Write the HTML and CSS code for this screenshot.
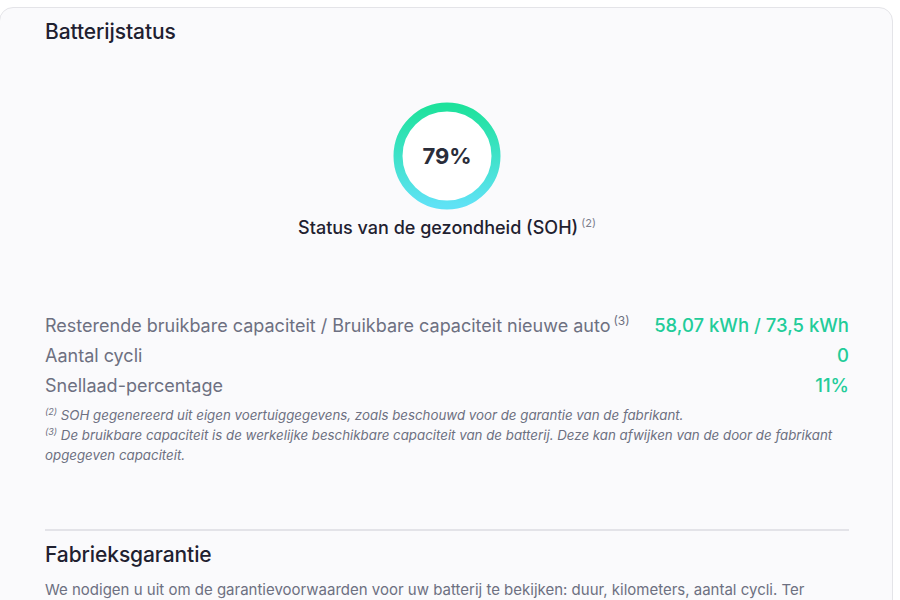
FILE: index.html
```html
<!DOCTYPE html>
<html lang="nl">
<head>
    <meta charset="UTF-8">
    <meta name="viewport" content="width=device-width, initial-scale=1.0">
    <title>Batterijstatus</title>
    <link rel="stylesheet" href="styles.css">
</head>
<body>
    <div class="card">
        <h2 class="section-title">Batterijstatus</h2>

        <div class="soh">
            <div class="soh-ring">
                <svg width="108" height="108" viewBox="0 0 108 108">
                    <defs>
                        <linearGradient id="ringGrad" x1="0" y1="0" x2="0" y2="1">
                            <stop offset="0" stop-color="#1ee29c"/>
                            <stop offset="1" stop-color="#5fe2f5"/>
                        </linearGradient>
                    </defs>
                    <circle cx="54" cy="54" r="49" fill="#ffffff" stroke="url(#ringGrad)" stroke-width="9"/>
                </svg>
                <span class="soh-value">79%</span>
            </div>
            <div class="soh-label">Status van de gezondheid (SOH)<sup>(2)</sup></div>
        </div>

        <div class="stats">
            <div class="stat-row">
                <span class="stat-label">Resterende bruikbare capaciteit / Bruikbare capaciteit nieuwe auto<sup>(3)</sup></span>
                <span class="stat-value">58,07 kWh / 73,5 kWh</span>
            </div>
            <div class="stat-row">
                <span class="stat-label">Aantal cycli</span>
                <span class="stat-value">0</span>
            </div>
            <div class="stat-row">
                <span class="stat-label">Snellaad-percentage</span>
                <span class="stat-value">11%</span>
            </div>
        </div>

        <div class="notes">
            <p><sup>(2)</sup> SOH gegenereerd uit eigen voertuiggegevens, zoals beschouwd voor de garantie van de fabrikant.</p>
            <p><sup>(3)</sup> De bruikbare capaciteit is de werkelijke beschikbare capaciteit van de batterij. Deze kan afwijken van de door de fabrikant opgegeven capaciteit.</p>
        </div>

        <hr class="divider">

        <h2 class="section-title">Fabrieksgarantie</h2>
        <p class="intro">We nodigen u uit om de garantievoorwaarden voor uw batterij te bekijken: duur, kilometers, aantal cycli. Ter informatie: de garantie is doorgaans gekoppeld aan een minimale waarde van de SOH.</p>
    </div>
</body>
</html>
```

FILE: styles.css
```css
body {
    margin: 0;
    background-color: #ffffff;
    font-family: Inter, "Noto Sans", sans-serif;
    color: #23252f;
    overflow: hidden;
}
.card {
    margin: 7px 7px 0 -1px;
    padding: 12px 43px 40px 45px;
    background-color: #fafafc;
    border: 1px solid #e4e4e8;
    border-radius: 14px;
}
.section-title {
    margin: 0;
    font-size: 21px;
    line-height: 24px;
    font-weight: 500;
    color: #1f2130;
    letter-spacing: -0.1px;
}
.soh {
    display: flex;
    flex-direction: column;
    align-items: center;
    margin-top: 58px;
}
.soh-ring {
    position: relative;
    width: 108px;
    height: 108px;
}
.soh-ring svg {
    display: block;
}
.soh-value {
    position: absolute;
    inset: 0;
    display: flex;
    align-items: center;
    justify-content: center;
    font-size: 22px;
    font-weight: 700;
    color: #2a2d3a;
}
.soh-label {
    margin-top: 7px;
    font-size: 18px;
    line-height: 22px;
    font-weight: 500;
    color: #1f2130;
}
sup {
    font-size: 11px;
    line-height: 0;
    vertical-align: 7px;
    margin-left: 3px;
    color: #7a7d8c;
    font-weight: 400;
}
.stats {
    margin-top: 71px;
}
.stat-row {
    display: flex;
    justify-content: space-between;
    align-items: center;
    height: 30px;
    font-size: 18px;
}
.stat-label {
    color: #6d7081;
}
.stat-label sup {
    color: #6d7081;
    font-size: 12px;
}
.stat-value {
    color: #22cc99;
    font-weight: 500;
    font-size: 18.5px;
}
.notes {
    margin-top: 5px;
    font-size: 13.3px;
    line-height: 20px;
    font-style: italic;
    color: #6d7081;
}
.notes p {
    margin: 0;
}
.notes sup {
    margin-left: 0;
    font-size: 9px;
    line-height: 14px;
    vertical-align: top;
    color: #6d7081;
}
.divider {
    margin: 64px 0 0;
    border: none;
    height: 2px;
    background-color: #e3e3e8;
}
.divider + .section-title {
    margin-top: 12px;
}
.intro {
    margin: 12px 0 0;
    font-size: 15px;
    line-height: 22px;
    color: #6d7081;
}
```
